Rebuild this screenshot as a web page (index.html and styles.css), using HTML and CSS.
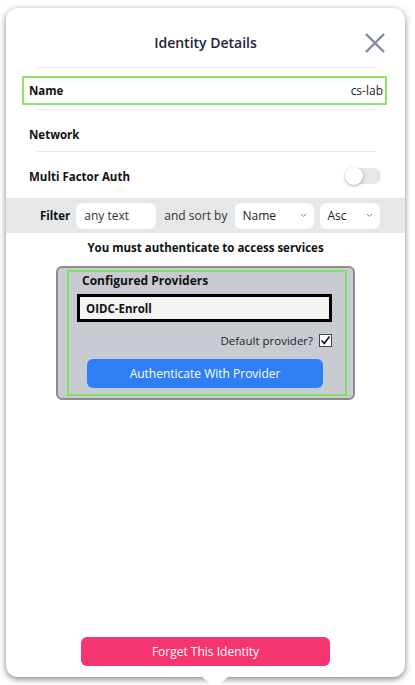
FILE: index.html
```html
<!DOCTYPE html>
<html lang="en">
<head>
  <meta charset="UTF-8" />
  <meta name="viewport" content="width=device-width, initial-scale=1.0"/>
  <title>Identity Details</title>
  <link rel="stylesheet" href="styles.css">
</head>
<body>

  <div class="card">
    <div class="header">
      <span></span>
      <h2>Identity Details</h2>
      <svg class="close" width="22" height="22" viewBox="0 0 22 22">
        <path d="M2 2 L20 20 M20 2 L2 20" stroke="#7b8aa6" stroke-width="2.4" fill="none"/>
      </svg>
    </div>
    <div class="divider"></div>

    <div class="row name-row">
      <span class="label">Name</span>
      <span class="value">cs-lab</span>
    </div>
    <div class="divider small"></div>

    <div class="row net-row">
      <span class="label">Network</span>
    </div>
    <div class="divider"></div>

    <div class="row mfa-row">
      <span class="label">Multi Factor Auth</span>
      <span class="toggle"><span class="knob"></span></span>
    </div>

    <div class="filter-bar">
      <span class="label">Filter</span>
      <div class="field">any text</div>
      <span class="sort-text">and sort by</span>
      <div class="field select name-select">
        <span>Name</span>
        <svg width="7" height="5" viewBox="0 0 7 5"><path d="M1 1 L3.5 3.5 L6 1" stroke="#888" stroke-width="1" fill="none"/></svg>
      </div>
      <div class="field select asc-select">
        <span>Asc</span>
        <svg width="7" height="5" viewBox="0 0 7 5"><path d="M1 1 L3.5 3.5 L6 1" stroke="#888" stroke-width="1" fill="none"/></svg>
      </div>
    </div>

    <p class="auth-msg">You must authenticate to access services</p>

    <div class="providers">
      <div class="providers-inner">
        <div class="providers-title">Configured Providers</div>
        <div class="provider-item">OIDC-Enroll</div>
        <div class="default-row">
          <span>Default provider?</span>
          <span class="checkbox">
            <svg width="11" height="11" viewBox="0 0 11 11"><path d="M1.5 5.5 L4.3 8.5 L9.5 1.5" stroke="#111" stroke-width="1.6" fill="none"/></svg>
          </span>
        </div>
        <button class="auth-btn">Authenticate With Provider</button>
      </div>
    </div>

    <button class="forget-btn">Forget This Identity</button>
  </div>

</body>
</html>
```

FILE: styles.css
```css
body {
  font-family: "Open Sans", Arial, sans-serif;
  background: #ffffff;
  margin: 0;
  padding: 8px 0 0 6px;
  height: 685px;
  box-sizing: border-box;
  overflow: hidden;
  color: #141414;
}

.card {
  position: relative;
  width: 399px;
  height: 669px;
  background: #fff;
  border-radius: 12px;
  box-shadow: 0 2px 6px rgba(0,0,0,0.5);
  display: flex;
  flex-direction: column;
}

.card::after {
  content: "";
  position: absolute;
  left: 196px;
  bottom: -10px;
  border-left: 13px solid transparent;
  border-right: 13px solid transparent;
  border-top: 10px solid #fff;
}

.header {
  display: grid;
  grid-template-columns: 1fr auto 1fr;
  align-items: center;
  height: 59px;
  padding-top: 10px;
  box-sizing: border-box;
}

.header h2 {
  margin: 0;
  font-size: 14px;
  font-weight: 600;
  color: #1e1e36;
}

.close {
  justify-self: end;
  margin-right: 19px;
}

.divider {
  height: 1px;
  background: #e8e8e8;
  margin: 0 30px 0 31px;
}

.row {
  display: flex;
  align-items: center;
  justify-content: space-between;
}

.label {
  font-weight: 700;
  font-size: 11.5px;
  color: #111;
}

.name-row {
  margin: 8px 18px 0 16px;
  height: 29px;
  border: 2px solid #8ee46a;
  box-sizing: border-box;
  padding: 0 2px 0 5px;
}

.value {
  font-size: 12px;
  color: #222;
}

.divider.small {
  margin-top: 4px;
}

.net-row {
  height: 41px;
  padding: 8px 0 0 23px;
  box-sizing: border-box;
}

.mfa-row {
  height: 46px;
  padding: 2px 24px 0 23px;
  box-sizing: border-box;
}

.toggle {
  position: relative;
  width: 35px;
  height: 16px;
  border-radius: 8px;
  background: #e3e6ea;
}

.knob {
  position: absolute;
  left: -1px;
  top: -1px;
  width: 18px;
  height: 18px;
  border-radius: 50%;
  background: #fff;
  box-shadow: 0 1px 3px rgba(0,0,0,0.35);
}

.filter-bar {
  display: flex;
  align-items: center;
  height: 35px;
  background: #e6e7e9;
  padding-left: 34px;
  font-size: 12px;
}

.filter-bar .label {
  font-size: 11.5px;
  margin-right: 6px;
}

.field {
  height: 26px;
  width: 80px;
  background: #fff;
  border-radius: 6px;
  box-sizing: border-box;
  padding: 0 8px;
  display: flex;
  align-items: center;
  color: #333;
}

.sort-text {
  margin: 0 8px;
  color: #333;
}

.select {
  justify-content: space-between;
  padding: 0 7px;
  color: #1a1a2e;
}

.name-select {
  width: 79px;
}

.asc-select {
  width: 60px;
  margin-left: 6px;
}

.auth-msg {
  margin: 6px 0 10px;
  text-align: center;
  font-size: 11.5px;
  font-weight: 700;
  line-height: 17px;
  color: #111;
}

.providers {
  width: 299px;
  margin: 0 auto;
  box-sizing: border-box;
  background: #c9cbd2;
  border: 2px solid #8c8c8c;
  border-radius: 6px;
  padding: 2px 6px 2px 9px;
}

.providers-inner {
  border: 2px solid #80e05d;
  padding: 0 13px 6px 8px;
}

.providers-title {
  font-size: 12px;
  font-weight: 700;
  line-height: 18px;
  padding-left: 5px;
  color: #111;
}

.provider-item {
  margin-top: 4px;
  height: 28px;
  box-sizing: border-box;
  border: 3px solid #000;
  background: #f3f3f3;
  padding-left: 6px;
  display: flex;
  align-items: center;
  font-size: 11.5px;
  font-weight: 700;
  color: #111;
}

.default-row {
  margin-top: 9px;
  height: 18px;
  display: flex;
  align-items: center;
  justify-content: flex-end;
  font-size: 11.5px;
  color: #222;
}

.checkbox {
  margin-left: 6px;
  width: 13px;
  height: 13px;
  box-sizing: border-box;
  border: 1px solid #444;
  background: #fff;
  display: flex;
  align-items: center;
  justify-content: center;
}

.auth-btn {
  display: block;
  margin: 10px 0 0 10px;
  width: 236px;
  height: 29px;
  border: none;
  border-radius: 6px;
  background: #2e7ff4;
  color: #fff;
  font-family: "Open Sans", Arial, sans-serif;
  font-size: 12px;
}

.forget-btn {
  margin: auto auto 11px;
  width: 249px;
  height: 29px;
  border: none;
  border-radius: 6px;
  background: #f5356f;
  color: #fff;
  font-family: "Open Sans", Arial, sans-serif;
  font-size: 12px;
}
```
